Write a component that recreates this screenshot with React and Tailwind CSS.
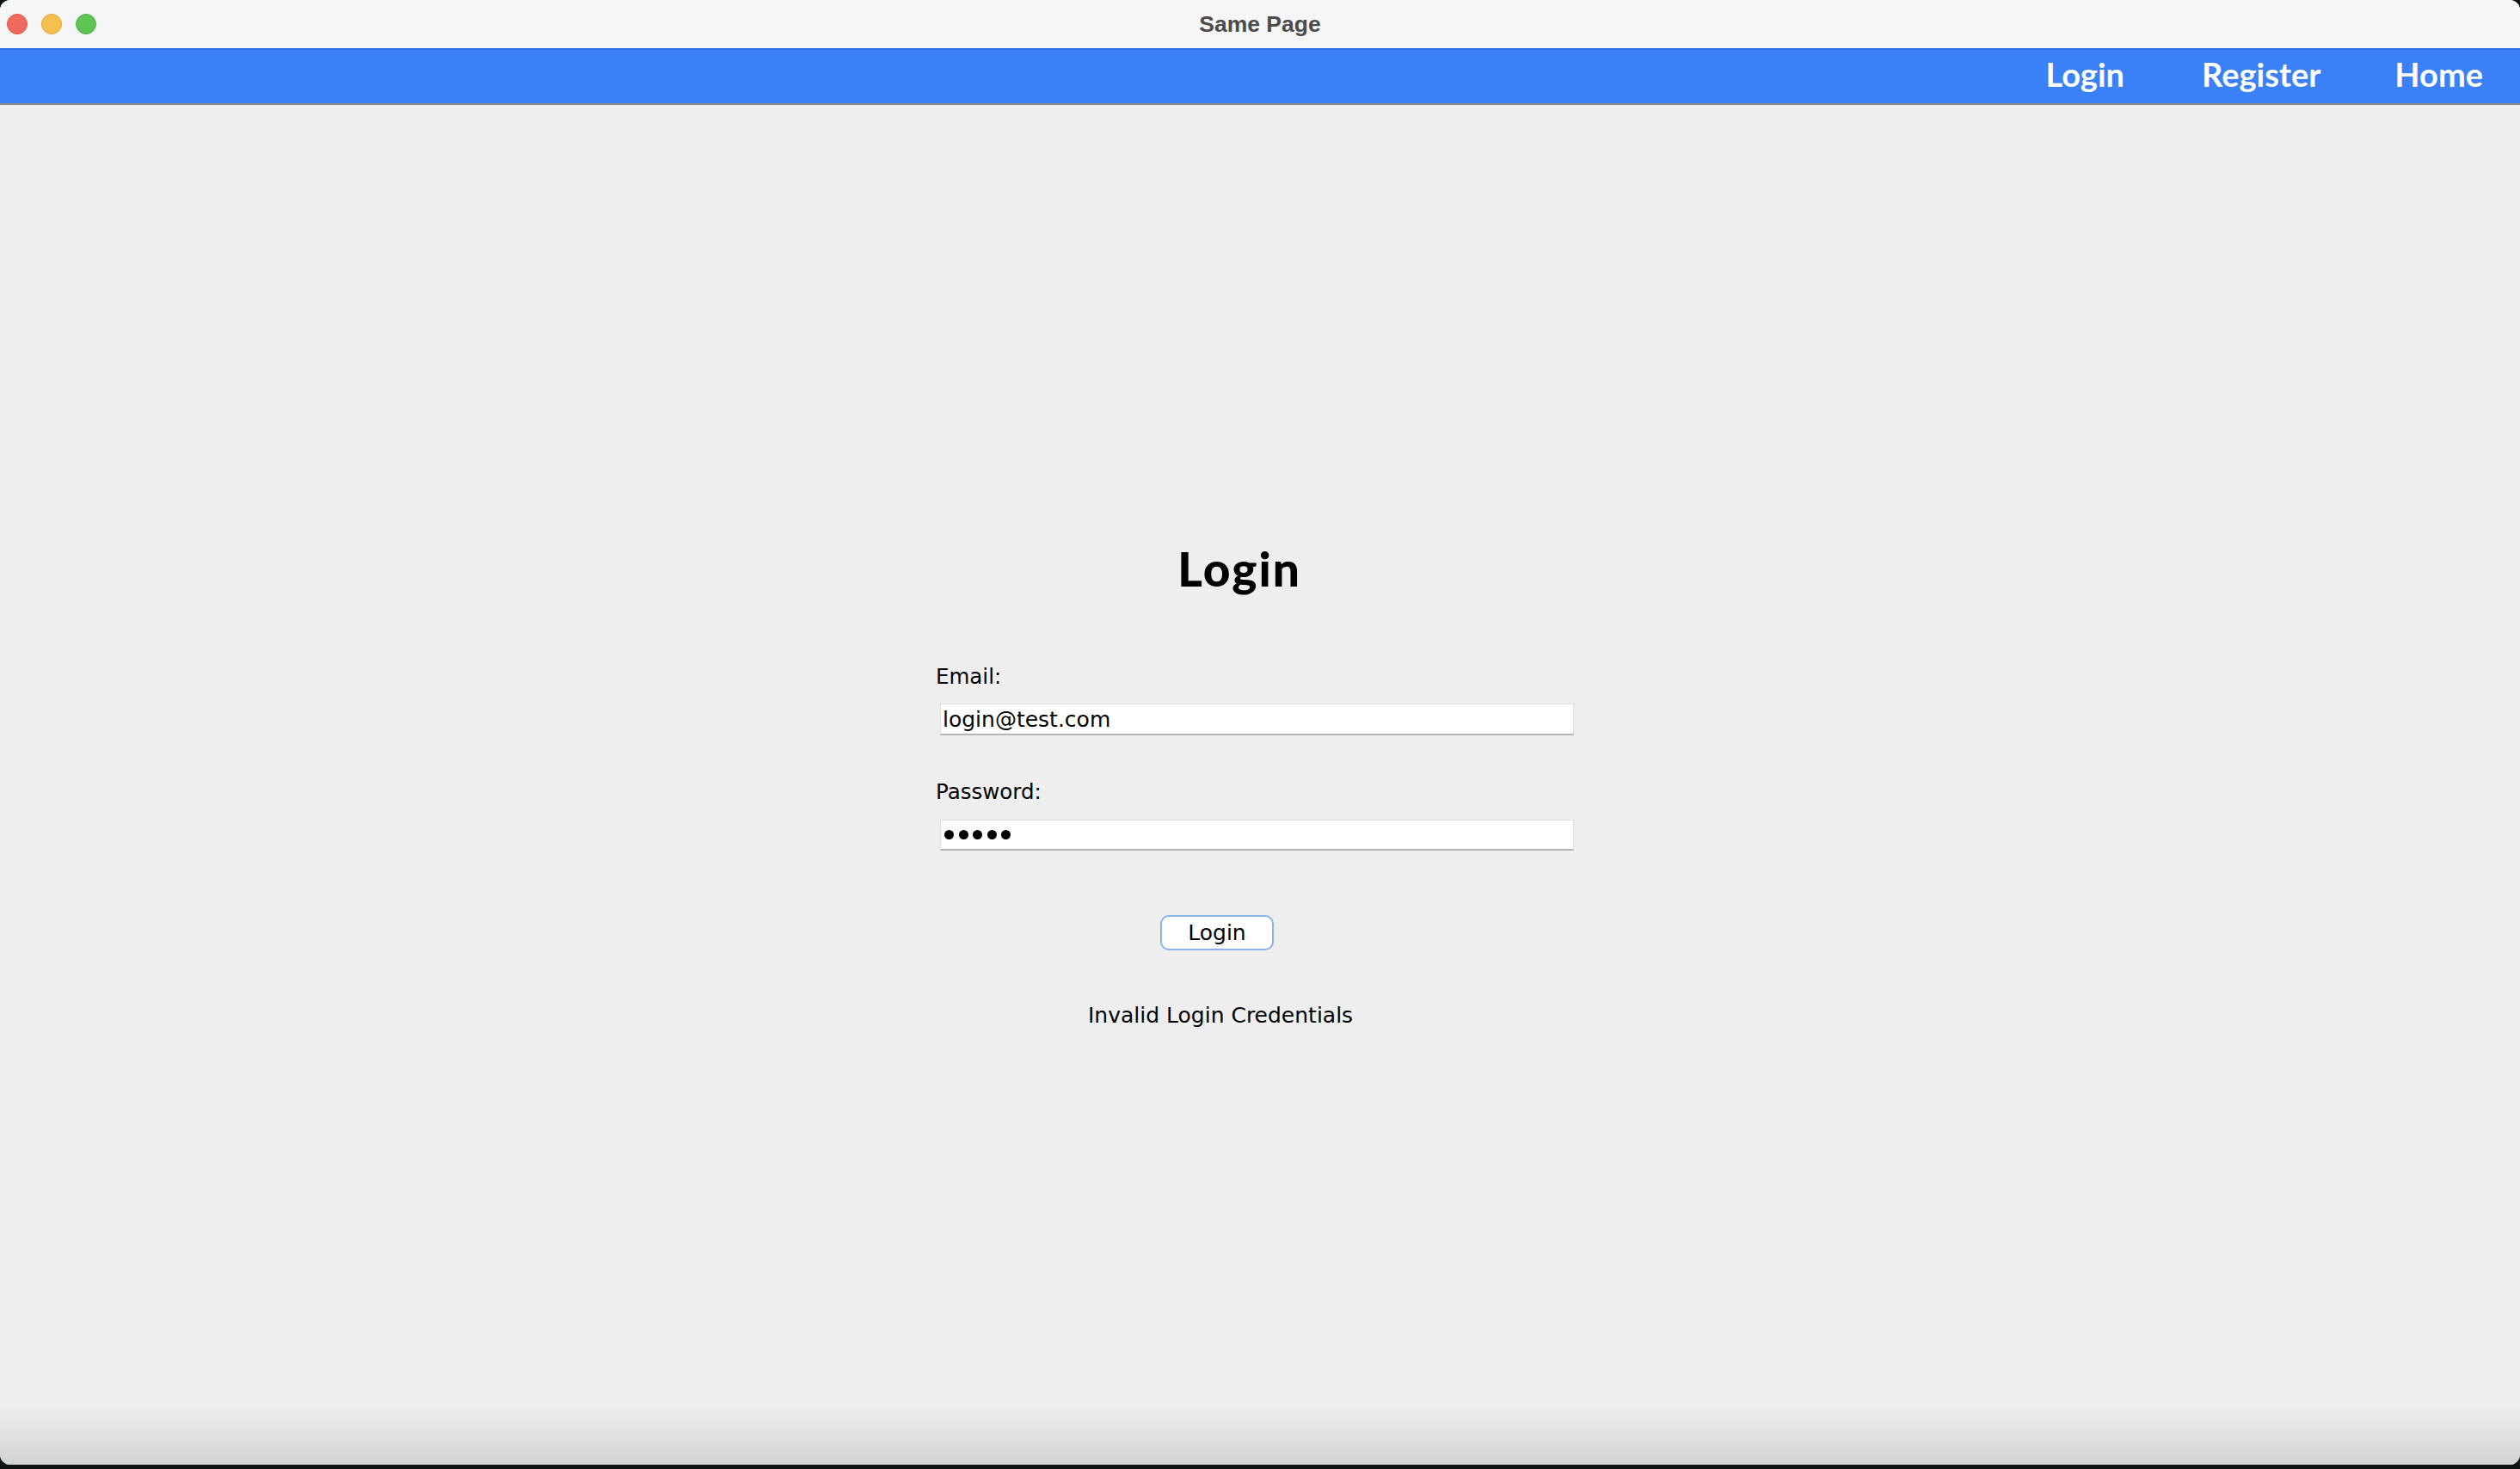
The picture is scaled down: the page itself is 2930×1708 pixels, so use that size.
import React from "react";

const navLinks = [
  { label: "Login", gap: "" },
  { label: "Register", gap: "ml-[90px]" },
  { label: "Home", gap: "ml-[86px]" },
];

export default function App() {
  return (
    <div className="h-[1708px] w-[2930px] overflow-hidden bg-[#0e1410]">
      <div className="relative flex h-[1703px] flex-col overflow-hidden rounded-[12px] bg-[#eeeeee]">
        {/* Title bar */}
        <div className="grid h-[56px] shrink-0 grid-cols-[1fr_auto_1fr] items-center bg-[#f6f6f6]">
          <div className="flex items-center gap-[16px] pl-[8px]">
            <span className="h-[24px] w-[24px] rounded-full border border-[#e0524a] bg-[#ee6a5f]" />
            <span className="h-[24px] w-[24px] rounded-full border border-[#dea737] bg-[#f6c04f]" />
            <span className="h-[24px] w-[24px] rounded-full border border-[#4fae43] bg-[#5fc454]" />
          </div>
          <div className="font-['Liberation_Sans',Arial,sans-serif] text-[26.5px] leading-[56px] font-bold text-[#4b4b4b]">
            Same Page
          </div>
          <div />
        </div>

        {/* Nav */}
        <nav className="flex h-[66px] shrink-0 justify-end border-t-2 border-b-2 border-t-[#2e6ee2] border-b-[#8a8a8a] bg-[#3a80f6] pt-[9px] pr-[43px]">
          {navLinks.map((link) => (
            <span
              key={link.label}
              className={`${link.gap} font-['Lato',sans-serif] text-[38px] leading-none font-bold whitespace-nowrap text-white`}
            >
              {link.label}
            </span>
          ))}
        </nav>

        {/* Login form */}
        <main className="flex flex-1 justify-center">
          <div className="flex w-[754px] flex-col">
            <div className="mt-[512px] ml-[283px] flex w-[140px] justify-center whitespace-nowrap">
              <h1 className="font-['Lato',sans-serif] text-[55px] leading-none font-black tracking-[2px] text-black">
                Login
              </h1>
            </div>

            <label className="mt-[85px] h-[25px] font-['DejaVu_Sans',sans-serif] text-[24.5px] leading-[25px] whitespace-nowrap text-black">
              Email:
            </label>
            <div className="mt-[19px] ml-[5px] h-[37px] w-[737px] border border-[#dddddd] border-b-2 border-b-[#b6b6b6] bg-white pl-[2px] font-['DejaVu_Sans',sans-serif] text-[25px] leading-[36px] whitespace-nowrap text-black">
              login@test.com
            </div>

            <label className="mt-[53px] h-[25px] font-['DejaVu_Sans',sans-serif] text-[24.5px] leading-[25px] whitespace-nowrap text-black">
              Password:
            </label>
            <div className="mt-[20px] ml-[5px] flex h-[36px] w-[737px] items-center gap-[5.5px] border border-[#dddddd] border-b-2 border-b-[#b6b6b6] bg-white pl-[4px]">
              {[0, 1, 2, 3, 4].map((i) => (
                <span key={i} className="h-[11px] w-[11px] rounded-full bg-black" />
              ))}
            </div>

            <button
              type="button"
              className="mt-[75px] ml-[261px] h-[41px] w-[132px] rounded-[10px] border-[2.5px] border-[#8ab3ee] bg-white font-['DejaVu_Sans',sans-serif] text-[25px] leading-[36px] text-black"
            >
              Login
            </button>

            <p className="mt-[63px] ml-[177px] font-['DejaVu_Sans',sans-serif] text-[25px] leading-none whitespace-nowrap text-black">
              Invalid Login Credentials
            </p>
          </div>
        </main>

        {/* bottom window shade */}
        <div className="pointer-events-none absolute inset-x-0 bottom-0 h-[70px] bg-linear-to-b from-transparent to-[#d3d3d3]" />
      </div>
    </div>
  );
}
